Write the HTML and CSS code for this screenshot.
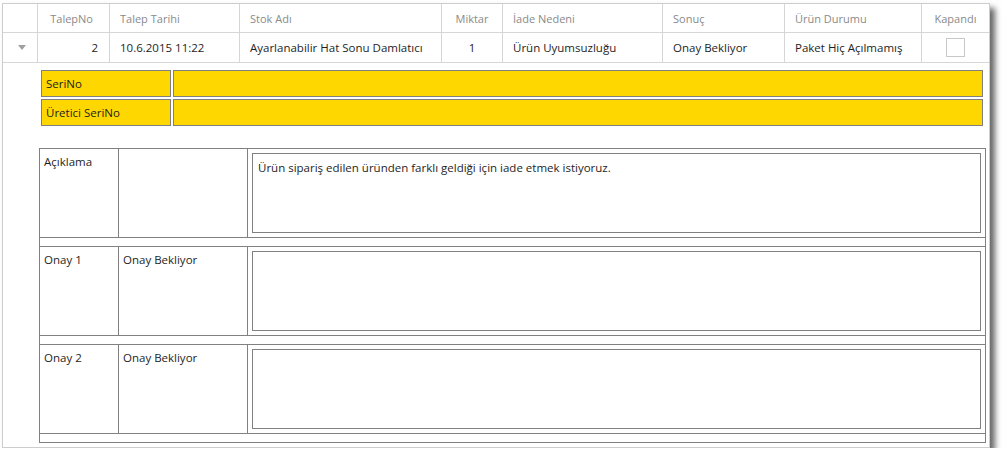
FILE: index.html
```html
<!DOCTYPE html>
<html lang="tr">
<head>
<meta charset="utf-8">
<title>Talep</title>
<link rel="stylesheet" href="styles.css">
</head>
<body>
<div class="panel">
  <div class="grid head">
    <div class="cell"></div>
    <div class="cell right">TalepNo</div>
    <div class="cell">Talep Tarihi</div>
    <div class="cell">Stok Adı</div>
    <div class="cell center">Miktar</div>
    <div class="cell">İade Nedeni</div>
    <div class="cell">Sonuç</div>
    <div class="cell">Ürün Durumu</div>
    <div class="cell center last">Kapandı</div>
  </div>
  <div class="grid data">
    <div class="cell center"><span class="caret"></span></div>
    <div class="cell right">2</div>
    <div class="cell">10.6.2015 11:22</div>
    <div class="cell">Ayarlanabilir Hat Sonu Damlatıcı</div>
    <div class="cell center">1</div>
    <div class="cell">Ürün Uyumsuzluğu</div>
    <div class="cell">Onay Bekliyor</div>
    <div class="cell">Paket Hiç Açılmamış</div>
    <div class="cell center last"><span class="check"></span></div>
  </div>
  <div class="detail">
    <div class="serials">
      <div class="ycell">SeriNo</div>
      <div class="ycell"></div>
      <div class="ycell">Üretici SeriNo</div>
      <div class="ycell"></div>
    </div>
    <div class="notes">
      <div class="ncell label">Açıklama</div>
      <div class="ncell label"></div>
      <div class="ncell"><div class="box">Ürün sipariş edilen üründen farklı geldiği için iade etmek istiyoruz.</div></div>
      <div class="spacer"></div>
      <div class="ncell label">Onay 1</div>
      <div class="ncell label">Onay Bekliyor</div>
      <div class="ncell"><div class="box"></div></div>
      <div class="spacer"></div>
      <div class="ncell label">Onay 2</div>
      <div class="ncell label">Onay Bekliyor</div>
      <div class="ncell"><div class="box"></div></div>
      <div class="spacer"></div>
    </div>
  </div>
</div>
</body>
</html>
```

FILE: styles.css
```css
* { box-sizing: border-box; }
html, body { margin: 0; padding: 0; background: #ffffff; }
body {
  font-family: "Open Sans", "Noto Sans", sans-serif;
  font-size: 11.5px;
  color: #1e1e1e;
}
.panel {
  margin: 3px 0 0 2px;
  width: 988px;
  height: 445px;
  border: 1px solid #cdcdcd;
  background: #ffffff;
  box-shadow: 5px 5px 6px rgba(0, 0, 0, 0.6);
}
.grid {
  display: grid;
  grid-template-columns: 35px 72px 130px 202px 61px 160px 122px 137px 1fr;
  border-bottom: 1px solid #d6d6d6;
}
.head { height: 29px; color: #8a8a8a; font-size: 11px; }
.data { height: 30px; color: #1e1e1e; }
.cell {
  border-right: 1px solid #d6d6d6;
  display: flex;
  align-items: center;
  padding: 0 10px;
  white-space: nowrap;
}
.cell.last { border-right: none; }
.cell.right { justify-content: flex-end; padding-right: 11px; }
.head .cell.right { padding-right: 16px; }
.cell.center { justify-content: center; padding: 0; }
.caret {
  width: 0; height: 0;
  border-left: 4px solid transparent;
  border-right: 4px solid transparent;
  border-top: 5px solid #a0a0a0;
  margin-left: 3px;
}
.check {
  width: 19px; height: 19px;
  border: 1px solid #c8c8c8;
  background: #ffffff;
}
.detail { padding: 7px 0 0 38px; }
.serials {
  display: grid;
  grid-template-columns: 130px 810px;
  grid-auto-rows: 27px;
  gap: 2px;
}
.ycell {
  background: #ffd700;
  border: 1px solid #7f7f7f;
  display: flex;
  align-items: center;
  padding-left: 4px;
  color: #1e1e1e;
}
.notes {
  margin: 22px 0 0 -2px;
  width: 947px;
  display: grid;
  grid-template-columns: 78px 128px 1fr;
  grid-template-rows: 88px 8px 88px 8px 88px 8px;
  gap: 1px;
  padding: 1px;
  background: #808080;
}
.ncell { background: #ffffff; padding: 4px; }
.ncell.label { padding: 5px 4px 0 4px; line-height: 16px; color: #1e1e1e; }
.spacer { grid-column: 1 / 4; background: #ffffff; }
.box {
  height: 100%;
  border: 1px solid #808080;
  padding: 6px 5px;
  line-height: 16px;
  color: #1e1e1e;
}
```
